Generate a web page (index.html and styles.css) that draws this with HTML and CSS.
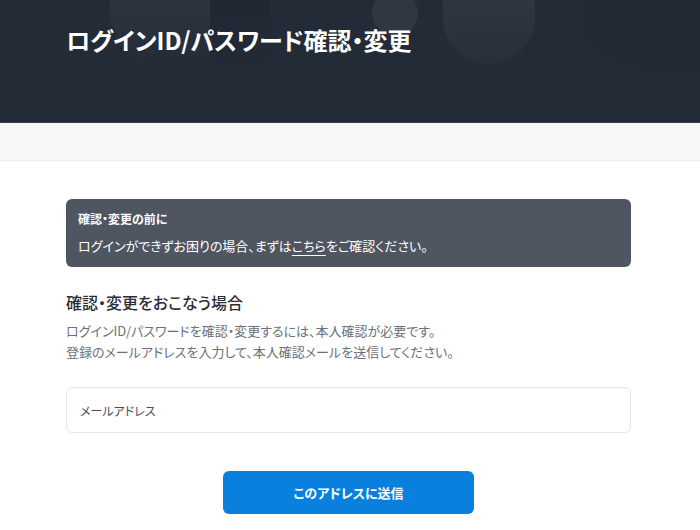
FILE: index.html
```html
<!DOCTYPE html>
<html lang="ja">

<head>
    <meta charset="UTF-8">
    <meta name="viewport" content="width=device-width, initial-scale=1.0">
    <title>ログインID/パスワード確認・変更</title>
    <link rel="stylesheet" href="styles.css">
</head>

<body>
    <div class="hero">
        <div class="deco deco-a"></div>
        <div class="deco deco-b"></div>
        <div class="deco deco-c"></div>
        <div class="deco deco-d"></div>
        <div class="deco deco-e"></div>
        <h1 class="hero-title">ログインID/パスワード確認・変更</h1>
    </div>
    <div class="band"></div>

    <div class="main">
        <div class="notice">
            <p class="notice-title">確認・変更の前に</p>
            <p class="notice-text">ログインができずお困りの場合、まずは<a href="#" class="notice-link">こちら</a>をご確認ください。</p>
        </div>

        <h2 class="section-title">確認・変更をおこなう場合</h2>
        <p class="section-text">ログインID/パスワードを確認・変更するには、本人確認が必要です。<br>登録のメールアドレスを入力して、本人確認メールを送信してください。</p>

        <input class="field" type="email" placeholder="メールアドレス">

        <div class="actions">
            <button class="btn">このアドレスに送信</button>
        </div>
    </div>
</body>

</html>
```

FILE: styles.css
```css
* {
    box-sizing: border-box;
}

body {
    margin: 0;
    font-family: "Noto Sans CJK JP", "Noto Sans", sans-serif;
    color: #2b2f36;
    background-color: #fff;
    font-feature-settings: "palt";
}

.hero {
    position: relative;
    height: 123px;
    background-color: #232b37;
    overflow: hidden;
    border-bottom: 1px solid #3a4350;
}

.deco {
    position: absolute;
    background: linear-gradient(180deg, rgba(255, 255, 255, 0.05), rgba(255, 255, 255, 0));
}

.deco-a {
    left: 110px;
    top: -10px;
    width: 100px;
    height: 80px;
    border-radius: 0 0 0 60px;
}

.deco-b {
    left: 210px;
    top: 0;
    width: 60px;
    height: 75px;
    background: linear-gradient(180deg, rgba(0, 0, 0, 0.08), rgba(0, 0, 0, 0));
}

.deco-c {
    left: 372px;
    top: -10px;
    width: 46px;
    height: 46px;
    border-radius: 50%;
    background: rgba(255, 255, 255, 0.06);
}

.deco-d {
    left: 443px;
    top: -30px;
    width: 92px;
    height: 94px;
    border-radius: 0 0 46px 46px;
    background: linear-gradient(180deg, rgba(255, 255, 255, 0.07), rgba(255, 255, 255, 0.02));
}

.deco-e {
    left: 582px;
    top: -30px;
    width: 140px;
    height: 100px;
    border-radius: 50% 0 0 50%;
    background: rgba(0, 0, 0, 0.04);
}

.hero-title {
    position: relative;
    margin: 0;
    padding: 22px 0 0 66px;
    font-size: 24px;
    font-weight: 700;
    color: #fff;
}

.band {
    height: 38px;
    background-color: #f6f7f9;
    border-bottom: 1px solid #eceef2;
}

.main {
    width: 565px;
    margin: 38px 0 0 66px;
}

.notice {
    background-color: #4f5661;
    border-radius: 6px;
    padding: 11px 12px 12px;
    color: #fff;
}

.notice-title {
    margin: 0;
    font-size: 12px;
    font-weight: 700;
    line-height: 18px;
}

.notice-text {
    margin: 8px 0 0;
    font-size: 13px;
    line-height: 19px;
}

.notice-link {
    color: #fff;
    text-decoration: underline;
    text-underline-offset: 4px;
}

.section-title {
    margin: 23px 0 0;
    font-size: 16px;
    font-weight: 500;
    line-height: 24px;
    color: #2b2f36;
}

.section-text {
    margin: 6px 0 0;
    font-size: 13px;
    line-height: 21px;
    color: #6b7079;
}

.field {
    display: block;
    width: 100%;
    height: 46px;
    margin-top: 25px;
    padding: 0 13px;
    border: 1px solid #e4e6e9;
    border-radius: 6px;
    font-family: inherit;
    font-feature-settings: "palt";
    font-size: 12px;
    color: #2b2f36;
}

.field::placeholder {
    color: #4a4e55;
}

.actions {
    display: flex;
    justify-content: center;
    margin-top: 38px;
}

.btn {
    width: 251px;
    height: 43px;
    border: none;
    border-radius: 6px;
    background-color: #0a80de;
    color: #fff;
    font-family: inherit;
    font-feature-settings: "palt";
    font-size: 13px;
    font-weight: 700;
    cursor: pointer;
}
```
